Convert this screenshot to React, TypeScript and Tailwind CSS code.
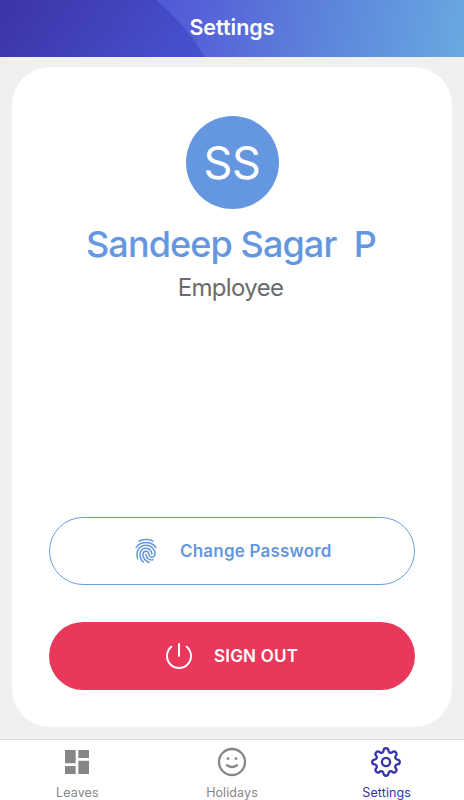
import type { ReactNode } from "react";
import { IoFingerPrint, IoPowerOutline } from "react-icons/io5";
import { MdDashboard } from "react-icons/md";

function Header() {
  return (
    <header className="relative flex h-[57px] shrink-0 items-center justify-center overflow-hidden bg-[linear-gradient(100deg,#4a4fd0_20%,#5560d8_42%,#5d85db_70%,#69a9e1_100%)]">
      <svg className="absolute inset-0" width="464" height="57" viewBox="0 0 464 57">
        <defs>
          <linearGradient id="wave" x1="0" y1="0" x2="1" y2="0.2">
            <stop offset="0" stopColor="#3b33a6" />
            <stop offset="1" stopColor="#474fcb" />
          </linearGradient>
        </defs>
        <path d="M0 0H156Q186 25 205 57H0Z" fill="url(#wave)" />
      </svg>
      <h1 className="relative -top-px text-[21.5px] font-semibold text-white">Settings</h1>
    </header>
  );
}

function SmileIcon() {
  return (
    <svg width="32" height="32" viewBox="-16 -16 32 32" fill="none" stroke="currentColor" strokeWidth="2.3" strokeLinecap="round">
      <circle r="13" />
      <path d="M-5 3.2Q0 6.8 5 3.2" />
      <circle cx="-4" cy="-3.4" r="1.4" fill="currentColor" stroke="none" />
      <circle cx="4" cy="-3.4" r="1.4" fill="currentColor" stroke="none" />
    </svg>
  );
}

// Eight round teeth joined by round notches
function GearIcon() {
  return (
    <svg width="32" height="32" viewBox="-16 -16 32 32" fill="none" stroke="currentColor" strokeWidth="2.3" strokeLinejoin="round">
      <path d="M-2.47 -11.64A2.5 2.5 0 0 1 2.47 -11.64A2.3 2.3 0 0 0 6.48 -9.98A2.5 2.5 0 0 1 9.98 -6.48A2.3 2.3 0 0 0 11.64 -2.47A2.5 2.5 0 0 1 11.64 2.47A2.3 2.3 0 0 0 9.98 6.48A2.5 2.5 0 0 1 6.48 9.98A2.3 2.3 0 0 0 2.47 11.64A2.5 2.5 0 0 1 -2.47 11.64A2.3 2.3 0 0 0 -6.48 9.98A2.5 2.5 0 0 1 -9.98 6.48A2.3 2.3 0 0 0 -11.64 2.47A2.5 2.5 0 0 1 -11.64 -2.47A2.3 2.3 0 0 0 -9.98 -6.48A2.5 2.5 0 0 1 -6.48 -9.98A2.3 2.3 0 0 0 -2.47 -11.64Z" />
      <circle r="4.1" />
    </svg>
  );
}

function Tab({ icon, label, active = false }: { icon: ReactNode; label: string; active?: boolean }) {
  return (
    <button
      className={`flex flex-1 flex-col items-center pt-1.5 ${active ? "text-[#3533ad]" : "text-[#868686]"}`}
    >
      <span className="mr-px flex h-8 items-center">{icon}</span>
      <span className="mt-[7px] text-[12.5px] leading-4 tracking-[0.1px]">{label}</span>
    </button>
  );
}

export default function App() {
  return (
    <div className="flex h-[800px] w-[464px] flex-col overflow-hidden bg-[#f0f0f0] font-['Inter',sans-serif]">
      <Header />

      <main className="mx-3 mt-2.5 mb-3 flex flex-1 flex-col items-center rounded-[38px] bg-white px-[37px] pt-[49px] pb-[37px]">
        <div className="flex size-[93px] items-center justify-center rounded-full bg-[#6497df] text-[45px] tracking-[-0.4px] text-white">
          SS
        </div>
        <h2 className="mt-3 mr-0.5 text-[36px] leading-[46px] font-medium tracking-[-0.9px] whitespace-pre text-[#6497df]">
          {"Sandeep Sagar  P"}
        </h2>
        <p className="mt-[5px] mr-[3px] text-[24px] leading-8 tracking-[-0.65px] text-[#6b6b6b]">Employee</p>

        <div className="mt-auto flex w-full flex-col gap-[37px]">
          <button className="flex h-[68px] items-center rounded-full border border-[#6b9be0] pl-[83px] text-[#6497df]">
            <IoFingerPrint size={26} />
            <span className="mt-0.5 ml-[21px] text-[17px] font-semibold tracking-[0.2px]">Change Password</span>
          </button>
          <button className="flex h-[68px] items-center rounded-full bg-[#ea385c] pl-[114px] text-white">
            <IoPowerOutline size={32} />
            <span className="mt-0.5 ml-[19px] text-[17px] font-semibold tracking-[0.2px]">SIGN OUT</span>
          </button>
        </div>
      </main>

      <nav className="flex h-[61px] shrink-0 border-t border-[#dcdcdc] bg-white">
        <Tab icon={<MdDashboard size={32} />} label="Leaves" />
        <Tab icon={<SmileIcon />} label="Holidays" />
        <Tab icon={<GearIcon />} label="Settings" active />
      </nav>
    </div>
  );
}
